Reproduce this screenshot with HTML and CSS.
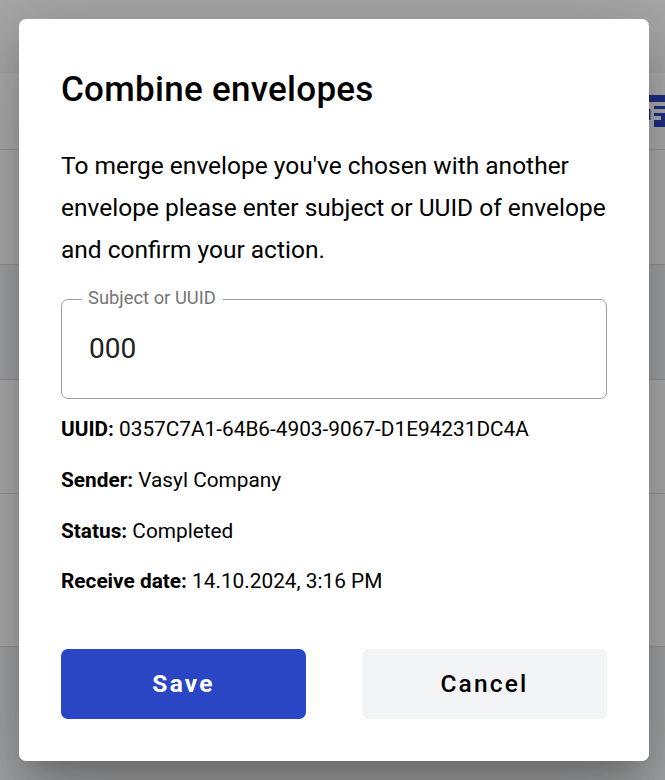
FILE: index.html
```html
<!DOCTYPE html>
<html lang="en">
<head>
<meta charset="utf-8">
<title>Combine envelopes</title>
<link rel="stylesheet" href="styles.css">
</head>
<body>
<div class="screen">
  <div class="page" aria-hidden="true">
    <div class="topbar"></div>
    <div class="toolbar">
      <svg class="tool-icon" width="16" height="34" viewBox="0 0 16 34">
        <path fill="#2b46c4" d="M0 1h16v7H0zM0 15h1.500v11H0zM5 12h11v3H5zM5 19h11v14H5V26h7v-4H5z"/>
      </svg>
    </div>
    <div class="row"></div>
    <div class="row row-shaded"></div>
    <div class="row row-short"></div>
    <div class="row row-tall"></div>
    <div class="row row-shaded row-last"></div>
  </div>
  <div class="backdrop">
    <section class="dialog" role="dialog" aria-labelledby="title">
      <h1 class="title" id="title">Combine envelopes</h1>
      <p class="intro">To merge envelope you've chosen with another envelope please enter subject or UUID of envelope and confirm your action.</p>
      <fieldset class="field">
        <legend class="field-label">Subject or UUID</legend>
        <div class="field-value">000</div>
      </fieldset>
      <div class="details">
        <p class="detail"><b>UUID:</b> 0357C7A1-64B6-4903-9067-D1E94231DC4A</p>
        <p class="detail"><b>Sender:</b> Vasyl Company</p>
        <p class="detail"><b>Status:</b> Completed</p>
        <p class="detail"><b>Receive date:</b> 14.10.2024, 3:16 PM</p>
      </div>
      <div class="actions">
        <button class="button button-primary" type="button">Save</button>
        <button class="button" type="button">Cancel</button>
      </div>
    </section>
  </div>
</div>
</body>
</html>
```
FILE: styles.css
```css
* { box-sizing: border-box; }
body {
  margin: 0;
  font-family: Roboto, "Liberation Sans", sans-serif;
  color: #000;
}
.screen {
  display: grid;
  grid-template: 780px / 1fr;
  overflow: hidden;
}
.page, .backdrop { grid-area: 1 / 1; }
.page { background: #fff; }
.topbar { height: 73px; background: #f7f7f7; }
.toolbar {
  display: flex;
  justify-content: flex-end;
  height: 77px;
  padding-top: 21px;
  border-bottom: 1px solid #dcdcdc;
}
.row { height: 115px; border-bottom: 1px solid #dadbdf; }
.row-shaded { background: #f1f2f4; }
.row-short { height: 114px; }
.row-tall { height: 153px; }
.row-last { height: 133px; border: 0; }
.backdrop {
  padding: 19px 16px 19px 19px;
  background: rgba(0, 0, 0, .32);
}
.dialog {
  display: flex;
  flex-direction: column;
  height: 742px;
  padding: 42px;
  border-radius: 7px;
  background: #fff;
  box-shadow:
    0 19.25px 26.25px -12.25px rgba(0, 0, 0, .2),
    0 42px 66.5px 5.25px rgba(0, 0, 0, .14),
    0 15.75px 80.5px 14px rgba(0, 0, 0, .12);
}
.title {
  margin: 0;
  padding-top: 1px;
  font-size: 35px;
  font-weight: 500;
  line-height: 56px;
  letter-spacing: .27px;
}
.intro {
  margin: 27px 0 0;
  font-size: 24.5px;
  line-height: 42px;
}
.field {
  min-width: 0;
  height: 113px;
  margin: 15px 0 0;
  padding: 0 27px;
  border: 1px solid #9e9e9e;
  border-radius: 7px;
}
.field-label {
  height: 26px;
  margin-left: -7px;
  padding: 0 7px 0 6px;
  font-size: 18.375px;
  line-height: 24px;
  color: #757575;
}
.field-value {
  padding-top: 19px;
  font-size: 28px;
  line-height: 36px;
  color: #212121;
}
.details { margin-top: 15px; }
.detail {
  margin: 0 0 20.75px;
  font-size: 20.8px;
  line-height: 30px;
}
.actions {
  display: grid;
  grid-template-columns: 1fr 1fr;
  gap: 56px;
  margin-top: auto;
}
.button {
  height: 70px;
  padding: 0;
  border: 0;
  border-radius: 7px;
  background: #f3f4f6;
  color: #000;
  font: 500 24.5px/70px Roboto, "Liberation Sans", sans-serif;
  letter-spacing: 2.19px;
}
.button-primary {
  background: #2b46c4;
  color: #fff;
  font-weight: 700;
}
```
